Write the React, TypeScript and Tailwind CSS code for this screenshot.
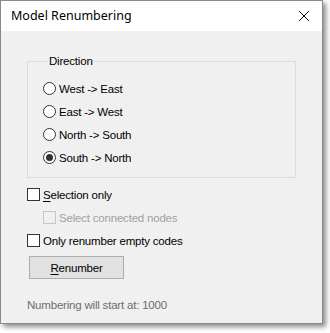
import React from "react";

function Radio({ label, checked }: { label: string; checked?: boolean }) {
  return (
    <div className="flex h-[23px] items-center">
      <span className="flex h-[13px] w-[13px] items-center justify-center rounded-full border border-[#333] bg-white">
        {checked && <span className="h-[7px] w-[7px] rounded-full bg-[#333]" />}
      </span>
      <span className="ml-[3px]">{label}</span>
    </div>
  );
}

function Check({ children, disabled }: { children: React.ReactNode; disabled?: boolean }) {
  return (
    <div className={`flex h-[23px] items-center ${disabled ? "text-[#a0a0a0]" : ""}`}>
      <span
        className={`h-[13px] w-[13px] border ${disabled ? "border-[#c6c6c6] bg-[#f0f0f0]" : "border-[#333] bg-white"}`}
      />
      <span className="ml-[3px]">{children}</span>
    </div>
  );
}

export default function App() {
  return (
    <div className="h-[333px] w-[330px] bg-white font-['Liberation_Sans',sans-serif] text-[11.5px] leading-[16px] tracking-[-0.2px] text-black">
      <div className="flex h-[324px] w-[323px] flex-col border border-[#8a8a8a] shadow-[3px_3px_5px_rgba(0,0,0,0.45)]">
        <div className="flex h-[30px] items-center justify-between bg-white pl-[10px] pr-[12px]">
          <span className="font-['Noto_Sans',sans-serif] text-[12.5px] tracking-normal">Model Renumbering</span>
          <svg width="12" height="12" viewBox="0 0 12 12">
            <path d="M1 1 L11 11 M11 1 L1 11" stroke="#111" strokeWidth="1" />
          </svg>
        </div>
        <div className="flex-1 bg-[#f0f0f0] pl-[26px]">
          <fieldset className="mt-[22px] w-[269px] border border-[#dcdcdc] pb-[8px] pl-[15px]">
            <legend className="ml-[5px] px-[1px]">Direction</legend>
            <div className="mt-[8px]">
              <Radio label="West -> East" />
              <Radio label="East -> West" />
              <Radio label="North -> South" />
              <Radio label="South -> North" checked />
            </div>
          </fieldset>
          <div className="mt-[5px]">
            <Check>
              <span className="underline underline-offset-2">S</span>election only
            </Check>
            <div className="pl-[16px]">
              <Check disabled>Select connected nodes</Check>
            </div>
            <Check>Only renumber empty codes</Check>
          </div>
          <button className="ml-[2px] mt-[4px] h-[23px] w-[95px] border border-[#adadad] bg-[#e1e1e1]">
            <span className="underline underline-offset-2">R</span>enumber
          </button>
          <div className="mt-[18px] text-[#6d6d6d]">Numbering will start at: 1000</div>
        </div>
      </div>
    </div>
  );
}
